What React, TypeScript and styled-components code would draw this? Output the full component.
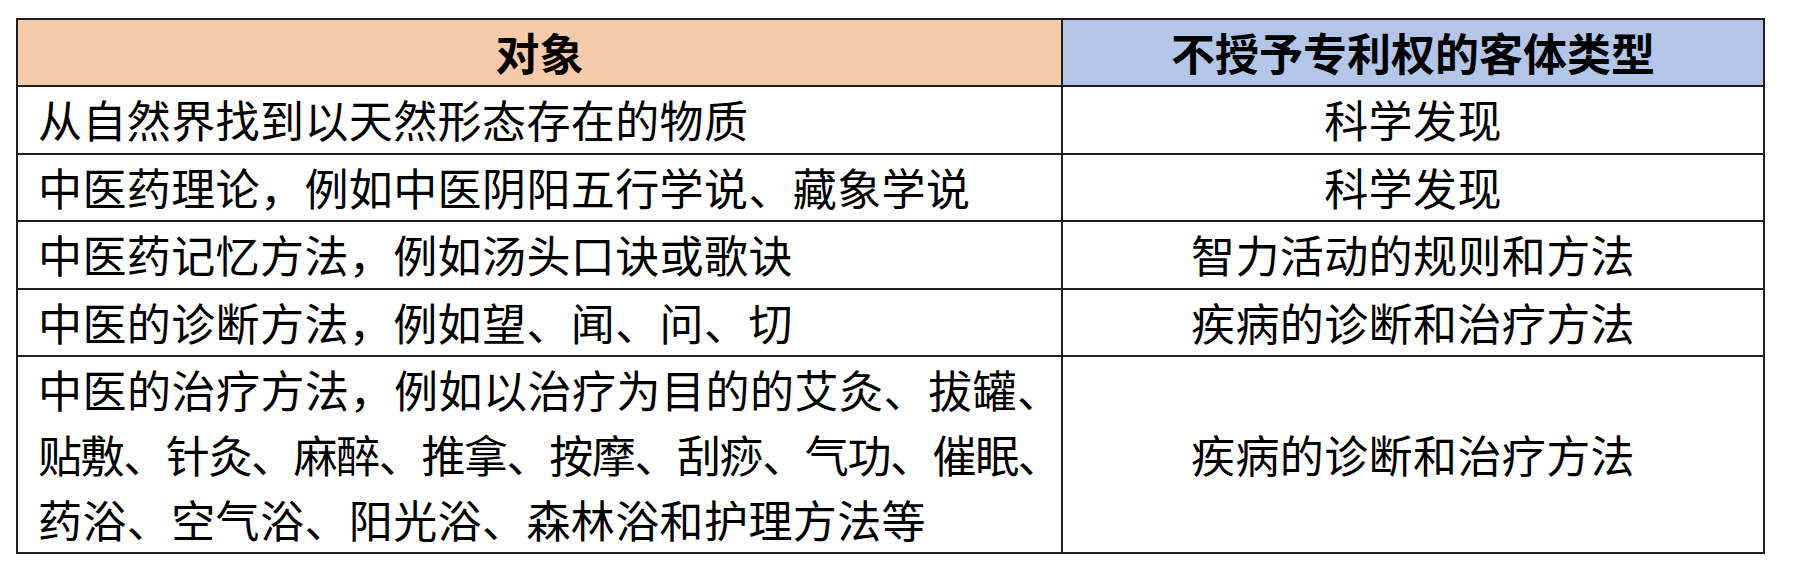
import React from 'react';
import styled, { createGlobalStyle } from 'styled-components';

const GlobalStyle = createGlobalStyle`
  html, body {
    margin: 0;
    padding: 0;
    background: #ffffff;
  }
  body {
    padding: 18px 0 0 16px;
    font-family: "Noto Sans CJK SC", "Noto Sans", sans-serif;
    color: #000000;
  }
`;

const Table = styled.table`
  border-collapse: collapse;
  width: 1749px;
  table-layout: fixed;
  font-size: 44px;
`;

const HeadCell = styled.th<{ $tone: 'orange' | 'blue' }>`
  background: ${(p) => (p.$tone === 'orange' ? '#f7caac' : '#b4c6e7')};
  border: 2px solid #1e1e1e;
  font-weight: 700;
  line-height: 65px;
  padding: 0;
  text-align: center;
`;

const Cell = styled.td<{ $center?: boolean }>`
  border: 2px solid #1e1e1e;
  font-weight: 400;
  line-height: 65.5px;
  letter-spacing: 0.4px;
  padding: 0 0 0 ${(p) => (p.$center ? '0' : '20px')};
  text-align: ${(p) => (p.$center ? 'center' : 'left')};
  vertical-align: middle;
  white-space: nowrap;
`;

const Line = styled.div<{ $spacing?: number }>`
  line-height: 65px;
  letter-spacing: ${(p) => p.$spacing ?? 0}px;
`;

const rows = [
  { object: '从自然界找到以天然形态存在的物质', type: '科学发现' },
  { object: '中医药理论，例如中医阴阳五行学说、藏象学说', type: '科学发现' },
  { object: '中医药记忆方法，例如汤头口诀或歌诀', type: '智力活动的规则和方法' },
  { object: '中医的诊断方法，例如望、闻、问、切', type: '疾病的诊断和治疗方法' },
];

const lastLines = [
  { text: '中医的治疗方法，例如以治疗为目的的艾灸、拔罐、', spacing: 0.5 },
  { text: '贴敷、针灸、麻醉、推拿、按摩、刮痧、气功、催眠、', spacing: -1.4 },
  { text: '药浴、空气浴、阳光浴、森林浴和护理方法等', spacing: 0.4 },
];

export default function App() {
  return (
    <>
      <GlobalStyle />
      <Table>
        <colgroup>
          <col style={{ width: 1045 }} />
          <col />
        </colgroup>
        <thead>
          <tr>
            <HeadCell $tone="orange">对象</HeadCell>
            <HeadCell $tone="blue">不授予专利权的客体类型</HeadCell>
          </tr>
        </thead>
        <tbody>
          {rows.map((r) => (
            <tr key={r.object}>
              <Cell>{r.object}</Cell>
              <Cell $center>{r.type}</Cell>
            </tr>
          ))}
          <tr>
            <Cell>
              {lastLines.map((l) => (
                <Line key={l.text} $spacing={l.spacing}>
                  {l.text}
                </Line>
              ))}
            </Cell>
            <Cell $center>疾病的诊断和治疗方法</Cell>
          </tr>
        </tbody>
      </Table>
    </>
  );
}
